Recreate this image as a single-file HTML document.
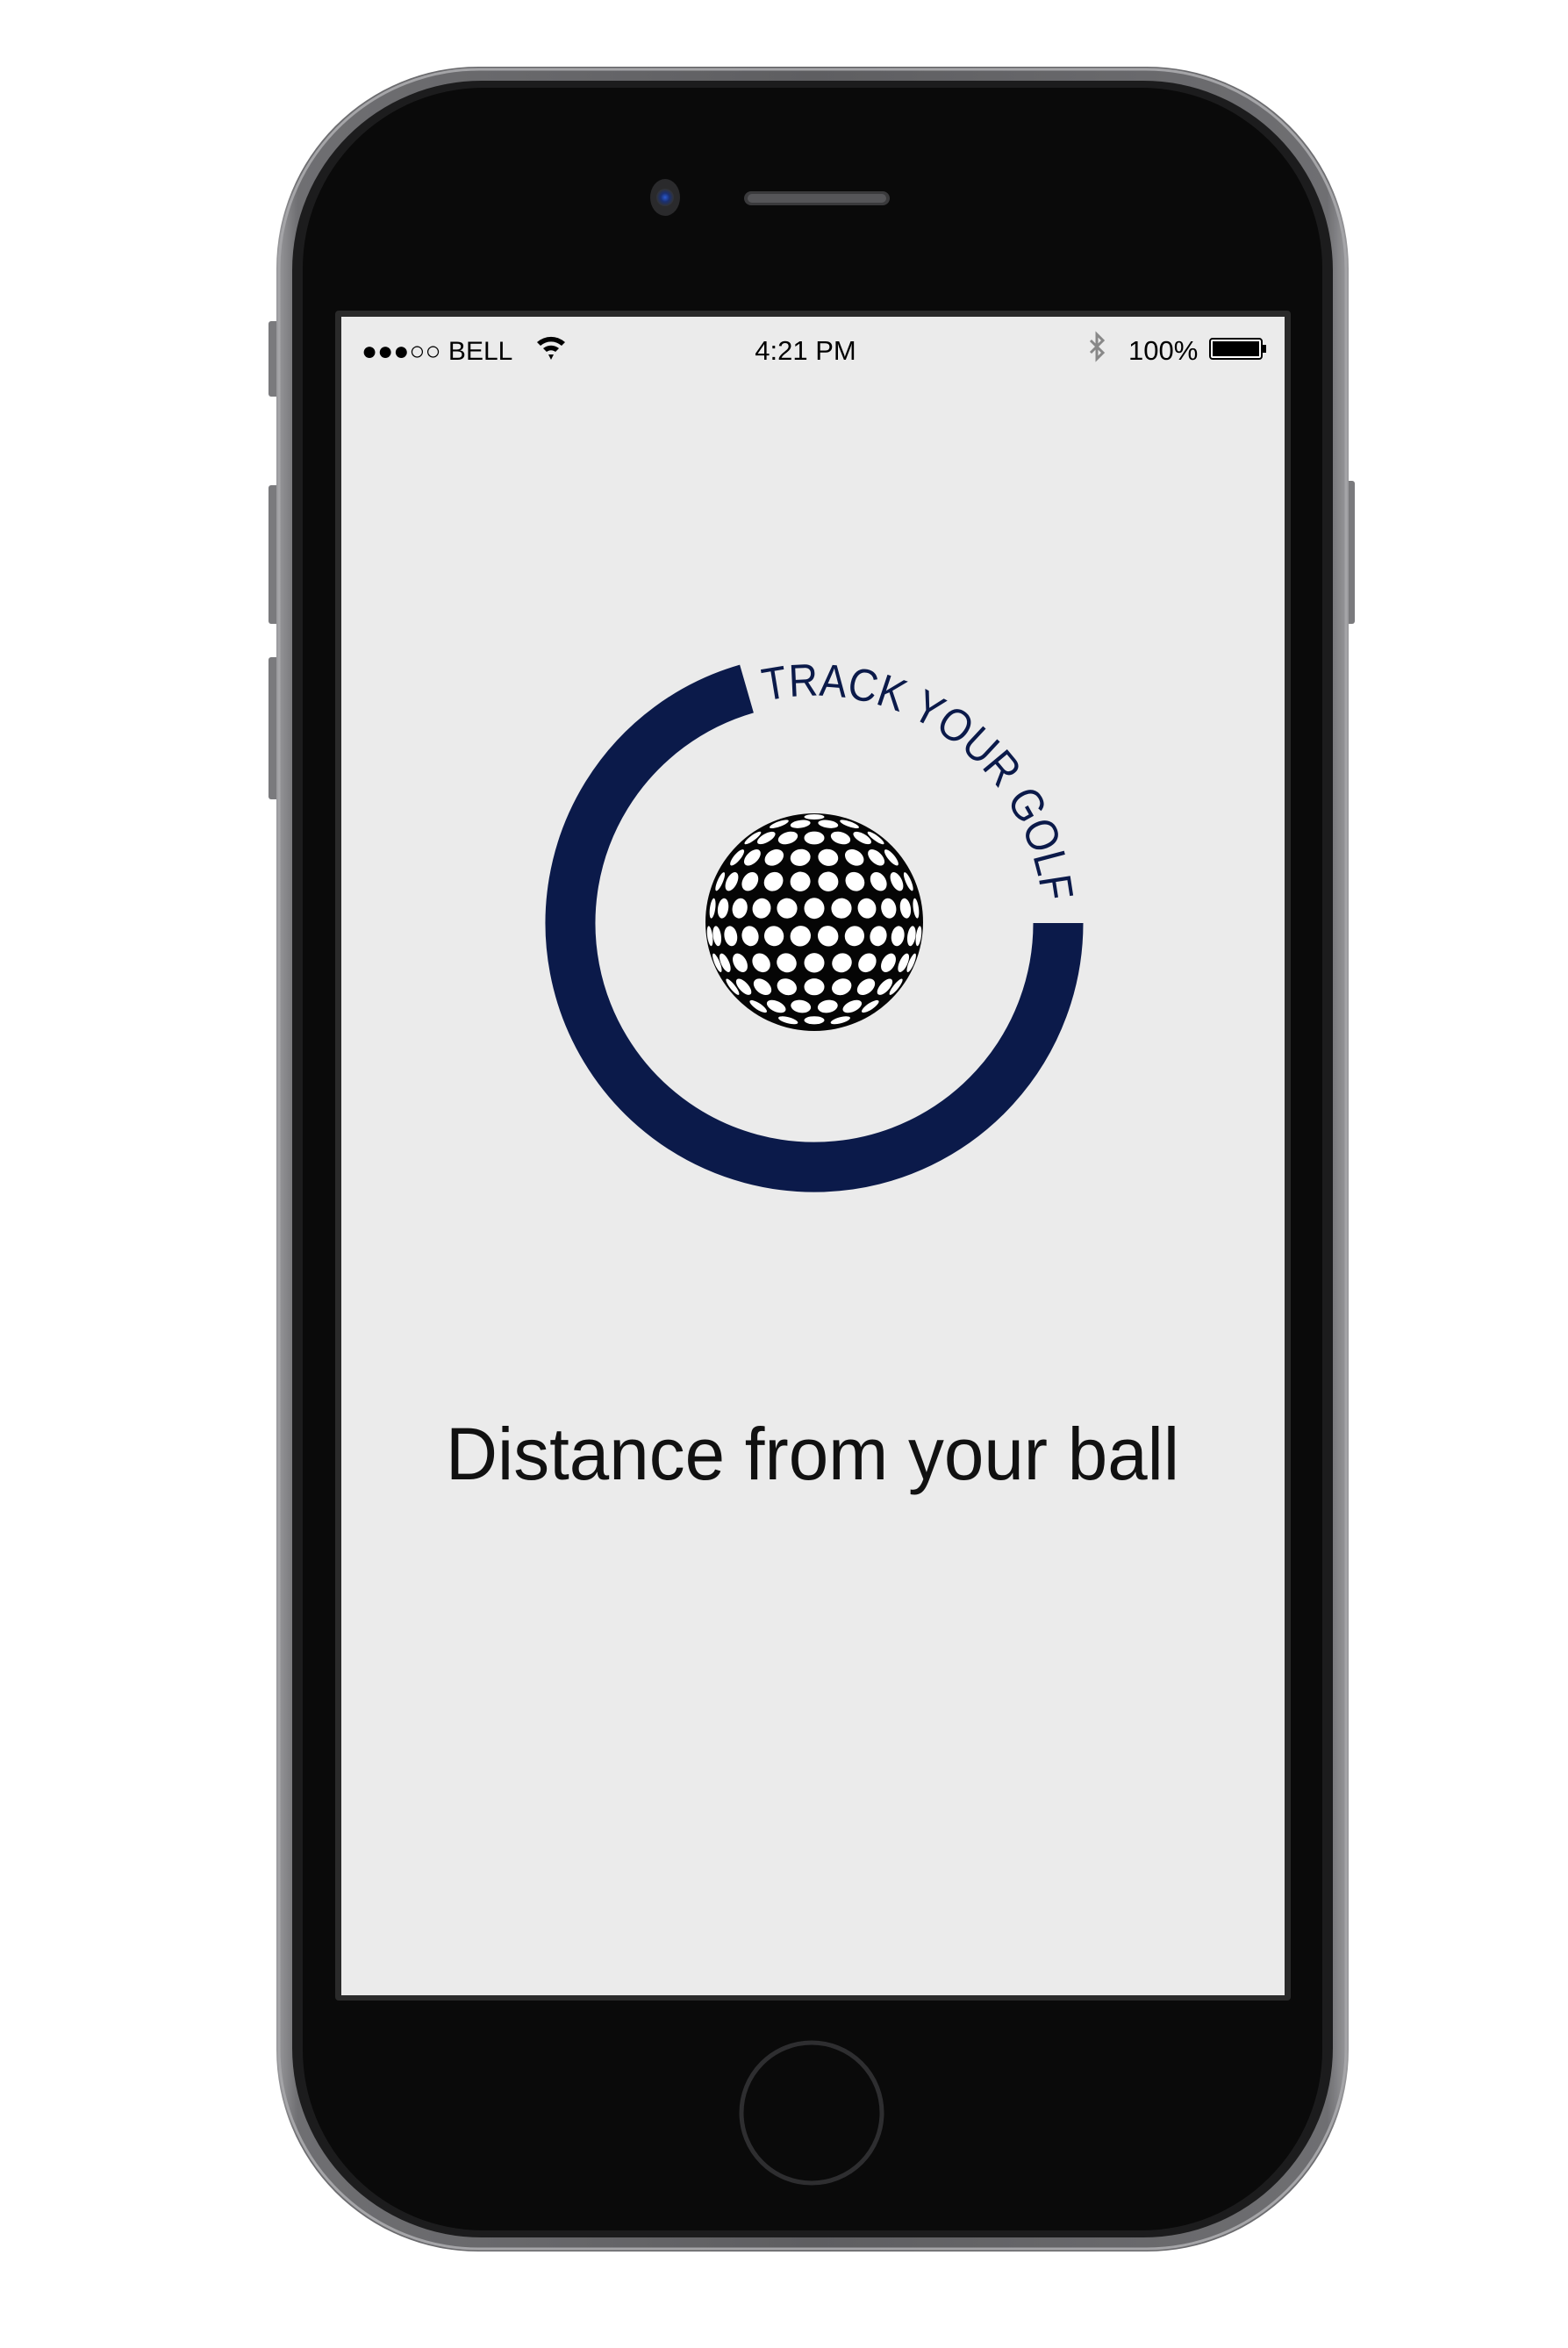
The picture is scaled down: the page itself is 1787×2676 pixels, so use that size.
<!DOCTYPE html>
<html><head><meta charset="utf-8"><style>
html,body{margin:0;padding:0;background:#fff;}
svg{display:block}
text{font-family:"Liberation Sans",sans-serif}
</style></head><body>
<svg id="s" width="1787" height="2676" viewBox="0 0 1787 2676" xmlns="http://www.w3.org/2000/svg">
<defs>
<linearGradient id="body" x1="0" y1="0" x2="1" y2="0">
<stop offset="0" stop-color="#9a9a9d"/><stop offset="0.02" stop-color="#6f6f72"/><stop offset="0.5" stop-color="#5e5e61"/><stop offset="0.98" stop-color="#6f6f72"/><stop offset="1" stop-color="#9a9a9d"/>
</linearGradient>
<radialGradient id="cam" cx="0.5" cy="0.5" r="0.5"><stop offset="0" stop-color="#2a5ad0"/><stop offset="0.5" stop-color="#1a2f70"/><stop offset="1" stop-color="#333"/></radialGradient>
</defs>
<rect x="306" y="366" width="12" height="86" rx="3" fill="#7a7a7d"/>
<rect x="306" y="553" width="12" height="158" rx="3" fill="#7a7a7d"/>
<rect x="306" y="749" width="12" height="162" rx="3" fill="#7a7a7d"/>
<rect x="1532" y="548" width="12" height="163" rx="3" fill="#7a7a7d"/>
<rect x="315" y="76" width="1222" height="2490" rx="230" fill="url(#body)"/>
<rect x="318" y="79" width="1216" height="2484" rx="228" fill="none" stroke="#a5a5a8" stroke-width="3"/>
<rect x="333" y="92" width="1186" height="2458" rx="216" fill="#1c1c1d"/>
<rect x="345" y="100" width="1162" height="2442" rx="206" fill="#0a0a0a"/>
<ellipse cx="758" cy="225" rx="17" ry="21" fill="#2a2a2c"/>
<circle cx="758" cy="225" r="10" fill="url(#cam)"/>
<rect x="848" y="218" width="166" height="16" rx="8" fill="#3a3a3c"/>
<rect x="852" y="221" width="158" height="10" rx="5" fill="#555558"/>
<rect x="382" y="354" width="1089" height="1926" rx="4" fill="#2a2a2a"/>
<rect x="389" y="361" width="1075" height="1913" fill="#ebebeb"/>
<text x="412" y="410" font-size="30" fill="#000">●●●○○ BELL</text>
<g transform="translate(628,398)" fill="#000">
<path d="M-16,-8 A24,24 0 0 1 16,-8 L12,-4 A18,18 0 0 0 -12,-4 Z"/>
<path d="M-9,-1 A14,14 0 0 1 9,-1 L5,3 A8,8 0 0 0 -5,3 Z"/>
<path d="M-3,6 L3,6 L0,12 Z"/>
</g>
<text x="918" y="410" font-size="31" fill="#000" text-anchor="middle">4:21 PM</text>
<path d="M1243,388 L1257,402 L1250,409 L1250,381 L1257,388 L1243,402" stroke="#888" stroke-width="3" fill="none"/>
<text x="1286" y="410" font-size="31" fill="#000">100%</text>
<rect x="1379" y="386" width="59" height="23" rx="3" fill="#fff" stroke="#000" stroke-width="2"/>
<rect x="1382" y="389" width="53" height="17" fill="#000"/>
<rect x="1439" y="393" width="4" height="9" fill="#000"/>
<path d="M851,785 A278,278 0 1 0 1206,1052" fill="none" stroke="#0b1a4a" stroke-width="57"/>
<path id="tp" d="M872,799 A261,261 0 0 1 1189,1052" fill="none"/>
<text font-size="52" fill="#0b1a4a"><textPath href="#tp" textLength="440" lengthAdjust="spacingAndGlyphs">TRACK YOUR GOLF</textPath></text>
<circle cx="928" cy="1051" r="124" fill="#050505"/>
<g id="dots" fill="#fff"></g>
<text x="508" y="1686" font-size="84" fill="#111" textLength="836" lengthAdjust="spacingAndGlyphs">Distance from your ball</text>
<circle cx="925" cy="2408" r="80" fill="none" stroke="#2e2e30" stroke-width="5"/>
</svg>
<script>
(function(){
var g=document.getElementById('dots'),cx=928,cy=1051,R=121,ns='http://www.w3.org/2000/svg';
var step=15*Math.PI/180,d=0.1*R;
for(var lat=-82.5;lat<=82.5;lat+=15){
 var la=lat*Math.PI/180,cl=Math.cos(la);
 var n=Math.max(1,Math.round(2*Math.PI*cl/step));
 var off=(Math.round(lat/15)%2)?0.5:0;
 for(var i=0;i<n;i++){
  var lo=(i+off)/n*2*Math.PI-Math.PI;
  var z=cl*Math.cos(lo);
  if(z<0.1)continue;
  var x=cx+R*cl*Math.sin(lo),y=cy+R*Math.sin(la);
  var e=document.createElementNS(ns,'ellipse');
  var ang=Math.atan2(y-cy,x-cx)*180/Math.PI;
  e.setAttribute('cx',x.toFixed(1));e.setAttribute('cy',y.toFixed(1));
  e.setAttribute('rx',(d*Math.max(z,0.25)).toFixed(1));e.setAttribute('ry',(d*0.95).toFixed(1));
  e.setAttribute('transform','rotate('+ang.toFixed(1)+' '+x.toFixed(1)+' '+y.toFixed(1)+')');
  g.appendChild(e);
 }
}
})();
</script>
</body></html>
